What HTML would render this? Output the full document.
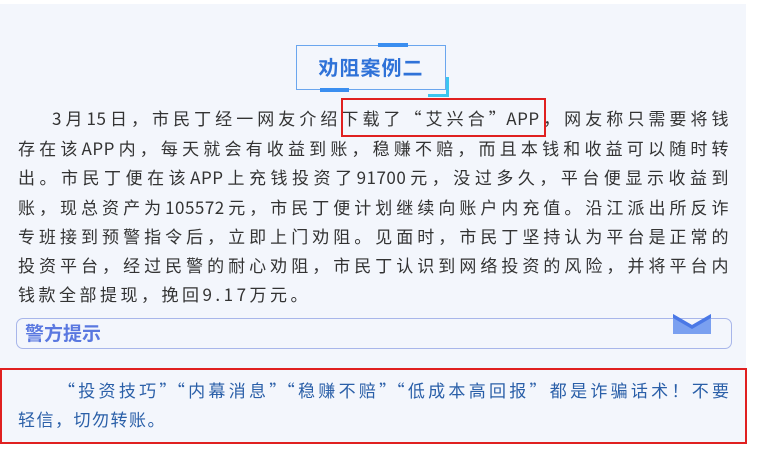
<!DOCTYPE html>
<html><head><meta charset="utf-8"><style>
*{margin:0;padding:0;box-sizing:border-box}
body{width:772px;height:451px;background:#fff;position:relative;overflow:hidden;font-family:"Noto Sans CJK SC","Liberation Sans",sans-serif}
.panel{position:absolute;left:0;top:4px;width:746px;height:366px;background:#f3f6fc}
.ln{position:absolute;left:18px;width:711px;font-size:17px;color:#333;text-align:justify;text-align-last:justify;white-space:nowrap;line-height:20px;letter-spacing:0.5px}
.title{position:absolute;left:296px;top:45px;width:150px;height:45px;border:1.5px solid #6aa6ee;color:#2f72d8;font-weight:bold;font-size:20px;text-align:center;line-height:42px;letter-spacing:1px}
.rb{position:absolute;border:2px solid #e02020}
.alert{position:absolute;left:16px;top:318px;width:716px;height:31px;border:1px solid #a8b6ea;border-radius:7px;color:#5a78e0;font-weight:bold;font-size:19px;line-height:28px;padding-left:8px}
.bl{position:absolute;left:18px;font-size:17px;color:#2a5fa8;line-height:20px;white-space:nowrap}
</style></head><body>
<div class="panel"></div>
<div class="title">劝阻案例二</div>
<div style="position:absolute;left:378px;top:43px;width:30px;height:4px;background:#3a8ef0"></div>
<div style="position:absolute;left:320px;top:88px;width:29px;height:4px;background:#3a8ef0"></div>
<div style="position:absolute;left:446px;top:77px;width:3px;height:20px;background:#3cc6f0"></div>
<div style="position:absolute;left:428px;top:94px;width:21px;height:3px;background:#3cc6f0"></div>
<div class="ln" style="top:108px;padding-left:34px">3月15日，市民丁经一网友介绍下载了“艾兴合”APP，网友称只需要将钱</div>
<div class="ln" style="top:138px">存在该APP内，每天就会有收益到账，稳赚不赔，而且本钱和收益可以随时转</div>
<div class="ln" style="top:167px">出。市民丁便在该APP上充钱投资了91700元，没过多久，平台便显示收益到</div>
<div class="ln" style="top:197px">账，现总资产为105572元，市民丁便计划继续向账户内充值。沿江派出所反诈</div>
<div class="ln" style="top:226px">专班接到预警指令后，立即上门劝阻。见面时，市民丁坚持认为平台是正常的</div>
<div class="ln" style="top:255px">投资平台，经过民警的耐心劝阻，市民丁认识到网络投资的风险，并将平台内</div>
<div class="ln" style="top:284px;text-align-last:left;width:auto;letter-spacing:3.5px">钱款全部提现，挽回9.17万元。</div>
<div class="rb" style="left:341px;top:98px;width:205px;height:39px"></div>
<div class="alert">警方提示</div>
<svg style="position:absolute;left:672px;top:313px" width="40" height="22" viewBox="0 0 40 22"><path d="M1 1 L20 12 L39 1 L39 21 L1 21 Z" fill="#7aa0f0"/><path d="M1 1 L20 12 L39 1 L39 5 L20 16 L1 5Z" fill="#4a78e6"/></svg>
<div class="rb" style="left:0;top:368px;width:747px;height:76px;background:#f3f6fc"></div>
<div class="bl" style="top:380px;left:58px;width:671px;text-align:justify;text-align-last:justify">“投资技巧”“内幕消息”“稳赚不赔”“低成本高回报”都是诈骗话术！不要</div>
<div class="bl" style="top:409px;letter-spacing:1.5px">轻信，切勿转账。</div>
</body></html>
